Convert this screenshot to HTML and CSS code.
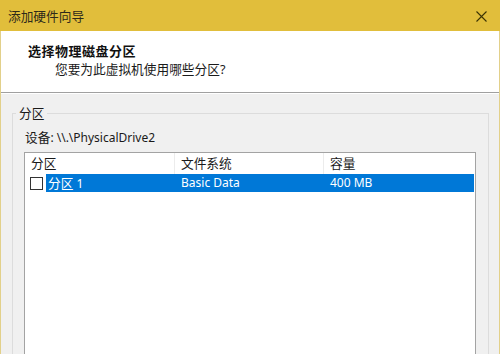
FILE: index.html
```html
<!DOCTYPE html>
<html lang="zh-CN">
<head>
    <meta charset="UTF-8">
    <title>添加硬件向导</title>
    <link rel="stylesheet" href="styles.css">
</head>
<body>
    <div class="window">
        <div class="titlebar">
            <span class="title zh">添加硬件向导</span>
            <svg class="close" width="11" height="11" viewBox="0 0 11 11">
                <path d="M0.5 0.5 L10.5 10.5 M10.5 0.5 L0.5 10.5" stroke="#3b3305" stroke-width="1.1" fill="none"/>
            </svg>
        </div>
        <div class="frame">
            <div class="header">
                <div class="header-title">选择物理磁盘分区</div>
                <div class="header-sub zh">您要为此虚拟机使用哪些分区?</div>
            </div>
            <div class="content">
                <fieldset class="group">
                    <legend class="zh">分区</legend>
                    <div class="device"><span class="zh">设备</span>: \\.\PhysicalDrive2</div>
                    <div class="list">
                        <div class="list-head">
                            <div class="col col-name zh">分区</div>
                            <div class="col col-fs zh">文件系统</div>
                            <div class="col col-size zh">容量</div>
                        </div>
                        <div class="list-row">
                            <div class="check-cell"><span class="check"></span></div>
                            <div class="sel">
                                <div class="cell cell-name"><span class="zh">分区</span> 1</div>
                                <div class="cell cell-fs">Basic Data</div>
                                <div class="cell cell-size">400 MB</div>
                            </div>
                        </div>
                    </div>
                </fieldset>
            </div>
        </div>
    </div>
</body>
</html>
```

FILE: styles.css
```css
body {
    margin: 0;
    font-family: "Noto Sans", "Noto Sans CJK SC", sans-serif;
    font-size: 12px;
    color: #1a1a1a;
}

/* YaHei draws Chinese a bit wider than the Latin text */
.zh {
    font-size: 12.7px;
}

.window {
    width: 500px;
    height: 354px;
    overflow: hidden;
    background-color: #f0f0f0;
    display: flex;
    flex-direction: column;
}

.titlebar {
    height: 31px;
    flex-shrink: 0;
    background-color: #e1be3b;
    display: flex;
    align-items: center;
    justify-content: space-between;
    padding: 0 13px 0 8px;
}

.title {
    color: #2e2a1a;
    line-height: 16px;
    margin-top: 1px;
}

.close {
    display: block;
    margin-top: 1px;
}

.frame {
    flex: 1;
    border-left: 1px solid #e2d08a;
    border-right: 1px solid #e2d08a;
    display: flex;
    flex-direction: column;
}

.header {
    height: 62px;
    background-color: #fff;
    border-bottom: 1px solid #a0a0a0;
    box-shadow: 0 1px 0 #fff;
    padding: 11px 0 0 27px;
    box-sizing: border-box;
    flex-shrink: 0;
}

.header-title {
    font-weight: bold;
    font-size: 13px;
    letter-spacing: 0.5px;
    line-height: 18px;
    color: #111;
}

.header-sub {
    line-height: 18px;
    margin-left: 27px;
}

.content {
    flex: 1;
    padding: 0 10px 0 11px;
}

.group {
    margin: 12px 0 0 0;
    padding: 0 12px 0 12px;
    border: 1px solid #dcdcdc;
    height: 260px;
}

.group legend {
    padding: 0 3px;
    margin-left: -9px;
    line-height: 16px;
}

.device {
    line-height: 16px;
    margin-top: 8px;
}

.list {
    margin: 6px 0 0 -1px;
    height: 220px;
    background-color: #fff;
    border: 1px solid #a3a3a3;
}

.list-head {
    display: flex;
    height: 21px;
    line-height: 21px;
}

.col {
    padding-left: 6px;
    box-sizing: border-box;
    border-right: 1px solid #ececec;
}

.col-name {
    width: 150px;
}

.col-fs {
    width: 149px;
}

.col-size {
    flex: 1;
    border-right: none;
}

.list-row {
    display: flex;
    height: 18px;
    line-height: 18px;
}

.check-cell {
    width: 21px;
    display: flex;
    align-items: center;
}

.check {
    width: 11px;
    height: 11px;
    margin-left: 5px;
    border: 1px solid #333;
    background-color: #fff;
}

.sel {
    flex: 1;
    display: flex;
    background-color: #0078d7;
    color: #fff;
    margin-right: 1px;
}

.cell-name {
    width: 129px;
    padding-left: 2px;
    box-sizing: border-box;
}

.cell-fs {
    width: 149px;
    padding-left: 6px;
    box-sizing: border-box;
}

.cell-size {
    flex: 1;
    padding-left: 6px;
}
```
